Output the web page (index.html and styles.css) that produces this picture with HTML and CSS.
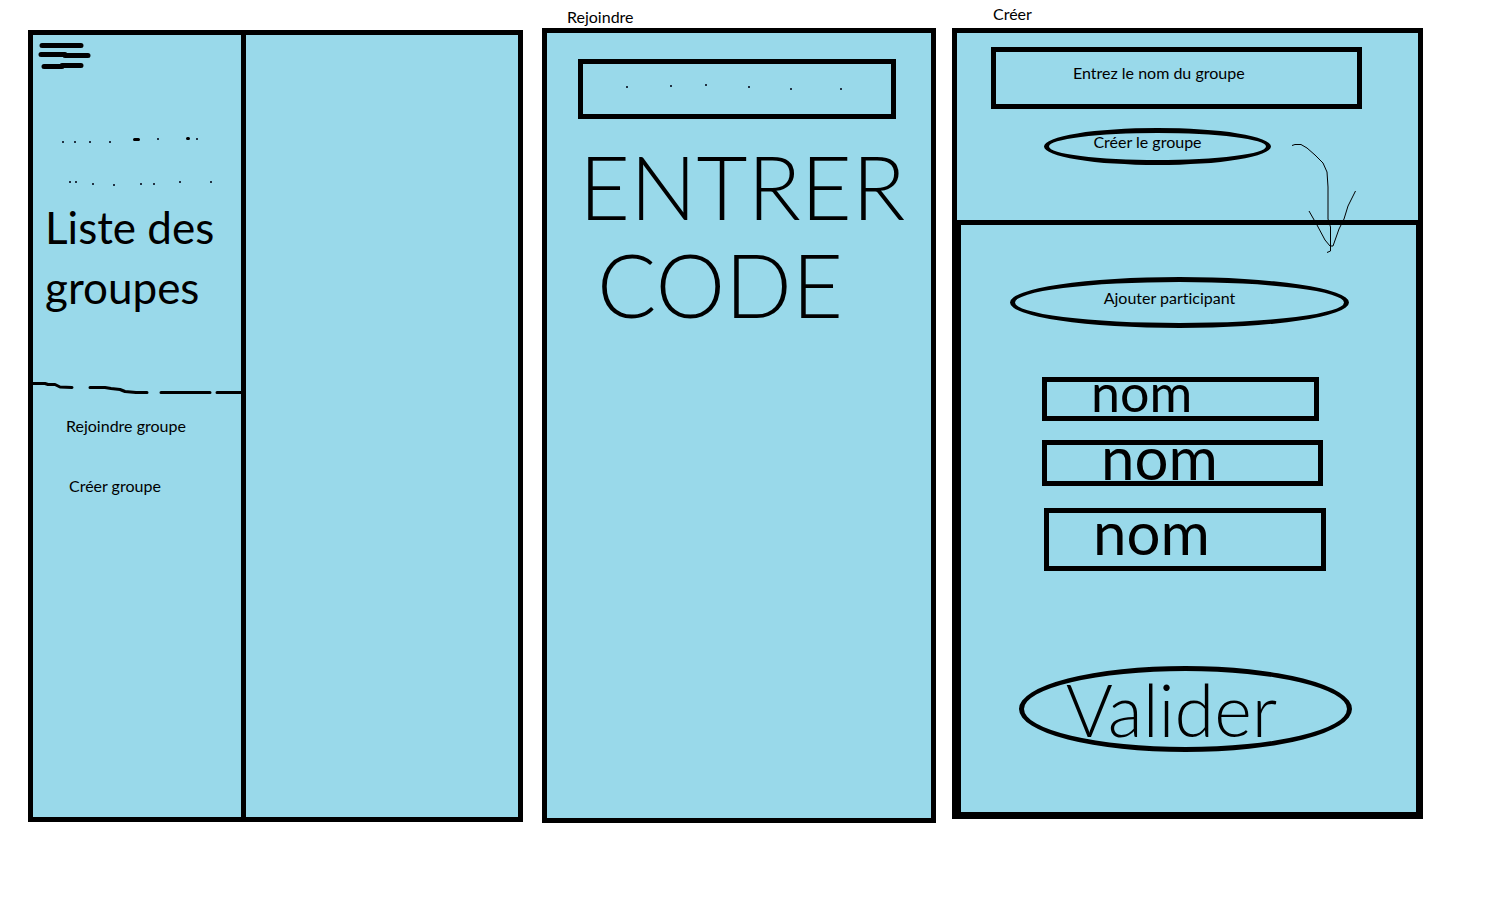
FILE: index.html
```html
<!DOCTYPE html>
<html lang="fr">
<head>
<meta charset="utf-8">
<meta name="viewport" content="width=device-width, initial-scale=1">
<title>Groupes</title>
<link rel="stylesheet" href="styles.css">
</head>
<body>
<main class="board">
  <section class="screen screen-home">
    <div class="frame home">
      <aside class="sidebar">
        <button class="menu" type="button" aria-label="Menu">
          <svg class="ink bold" viewBox="38 41 54 28" width="54" height="28"><path d="M42 45.500H81M41 54.500H65M65 55.500H88M44 66.500H62M62 65.500H81"/></svg>
        </button>
        <svg class="ink dots" viewBox="33 130 208 60" width="208" height="60" aria-hidden="true">
          <path d="M62 142h2M74 142h2M89 142h2M109 142h2M157 139h2M196 139h2M69 182h2M75 182h2M92 184h2M113 185h2M140 184h2M153 184h2M179 182h2M210 182h2"/>
          <path class="blob" d="M134.500 139.500h4M187.500 138.500h1"/>
        </svg>
        <h1 class="sketch list-title">Liste des<br>groupes</h1>
        <svg class="ink dashes" viewBox="33 380 208 16" height="16" preserveAspectRatio="none" aria-hidden="true"><path d="M33 383.500H45L48 384.500H55L60 387L72 387.500M90 387.500H105L111 388.500L120 389.500L125 391.500L136 392.500H147M161 392.500H210M217 392.500H243"/></svg>
        <nav class="links">
          <a href="#rejoindre">Rejoindre groupe</a>
          <a class="create" href="#creer">Créer groupe</a>
        </nav>
      </aside>
      <div class="content"></div>
    </div>
  </section>

  <section class="screen screen-join" id="rejoindre">
    <h2 class="label">Rejoindre</h2>
    <div class="frame">
      <div class="code-box">
        <input class="code-input" id="code" type="text" maxlength="6" aria-labelledby="code-label">
        <svg class="ink code-dots" viewBox="583 64 308 50" aria-hidden="true"><path d="M626 87h2M670 86h2M705 85h2M748 87h2M790 89h2M840 89h2"/></svg>
      </div>
      <label class="sketch code-label" id="code-label" for="code">ENTRER<br>CODE</label>
    </div>
  </section>

  <section class="screen screen-create" id="creer">
    <h2 class="label">Créer</h2>
    <div class="frame create-frame">
      <form class="name-form">
        <input class="field group-name" type="text" placeholder="Entrez le nom du groupe" aria-label="Nom du groupe">
        <button class="oval create-group" type="button">Créer le groupe</button>
      </form>
      <form class="members">
        <button class="oval add" type="button">Ajouter participant</button>
        <input class="field member first sketch" type="text" value="nom" aria-label="Participant 1">
        <input class="field member second sketch" type="text" value="nom" aria-label="Participant 2">
        <input class="field member third sketch" type="text" value="nom" aria-label="Participant 3">
        <button class="oval submit sketch" type="button">Valider</button>
      </form>
      <svg class="ink arrow" viewBox="1291 143 66 111" width="66" height="111" aria-hidden="true"><path d="M1292 145.500L1295 144.500H1301L1307 148L1315 155L1323 163L1327 172L1328 187V219L1330.500 227V251L1327 252.500M1309 211L1317 225L1325 240L1330 246H1333L1339 229L1344 219L1348 206L1355.500 191"/></svg>
    </div>
  </section>
</main>
</body>
</html>
```
FILE: styles.css
```css
* { box-sizing: border-box; }

body {
  margin: 0;
  background: #fff;
  color: #000;
  font: 16px/24px Lato, "Open Sans", sans-serif;
}

.board {
  display: flex;
  min-height: 100vh;
  padding: 0 63px 86px 28px;
}

.screen {
  display: flex;
  flex-direction: column;
  min-width: 0;
}
.screen-home { flex: 495 1 0; padding: 30px 0 1px; }
.screen-join { flex: 394 1 0; margin-left: 19px; }
.screen-create { flex: 471 1 0; margin: 0 0 4px 16px; }

.label {
  height: 28px;
  margin: 0;
  padding: 5px 0 0 25px;
  font-size: 16px;
  font-weight: 400;
}
.screen-create .label { padding: 2px 0 0 41px; }

.frame {
  flex: 1;
  position: relative;
  border: 5px solid #000;
  background: #99d9ea;
}

.sketch {
  font-family: Lato, "Open Sans", sans-serif;
  font-weight: 400;
}

.ink {
  display: block;
  fill: none;
  stroke: #000;
  stroke-width: 2;
  stroke-linejoin: round;
}

/* Home */
.home {
  display: grid;
  grid-template-columns: 213fr 272fr;
}
.sidebar {
  min-width: 0;
  border-right: 5px solid #000;
}

.menu {
  display: block;
  margin: 6px 0 0 5px;
  padding: 0;
  border: 0;
  background: none;
}
.bold { stroke-width: 5; stroke-linecap: round; }
.dots { max-width: 100%; margin-top: 61px; stroke: #234; }
.blob { stroke: #000; stroke-width: 3; stroke-linecap: round; }

.list-title {
  margin: 7px 0 0;
  padding-left: 12px;
  font-size: 44px;
  line-height: 60px;
}

.dashes {
  width: 100%;
  margin-top: 63px;
  stroke-width: 3;
  stroke-linecap: round;
}

.links {
  display: flex;
  flex-direction: column;
  gap: 36px;
  margin-top: 18px;
  padding-left: 33px;
}
.links a { color: inherit; text-decoration: none; }
.links .create { padding-left: 3px; }

/* Join */
.code-box {
  position: relative;
  height: 60px;
  margin: 26px 35px 0 31px;
}
.code-input {
  width: 100%;
  height: 100%;
  padding: 0 40px;
  border: 5px solid #000;
  border-radius: 0;
  background: none;
  font: inherit;
}
.code-dots {
  position: absolute;
  inset: 5px;
  stroke: #234;
  pointer-events: none;
}
.code-label {
  display: block;
  margin-top: 18px;
  padding-left: 50px;
  font-size: 88px;
  font-weight: 300;
  line-height: 98px;
  text-indent: -18px;
}

/* Create */
.create-frame,
.name-form,
.members {
  display: flex;
  flex-direction: column;
}
.name-form { padding: 14px 56px 55px 34px; }

.field,
.oval {
  border: 5px solid #000;
  background: none;
  color: #000;
  font-size: 16px;
  line-height: 18px;
}
.field {
  width: 100%;
  border-radius: 0;
}
.oval {
  padding: 0;
  border-radius: 50%;
  font-variant-ligatures: none;
}
.group-name,
.create-group,
.add { font-family: inherit; }

.group-name {
  height: 62px;
  padding: 0 0 12px 77px;
}
.group-name::placeholder { color: #000; opacity: 1; }

.create-group {
  height: 37px;
  margin: 19px 91px 0 53px;
  padding: 0 20px 9px 0;
}

.members {
  flex: 1;
  padding: 52px 64px 58px 49px;
  border: solid #000;
  border-width: 5px 2px 2px 4px;
}
.add {
  height: 51px;
  margin-right: 3px;
  padding: 0 20px 10px 0;
}
.member {
  width: auto;
  padding: 0 0 16px 44px;
  font-size: 60px;
}
.first {
  height: 44px;
  margin: 49px 33px 0 32px;
  padding-bottom: 14px;
  font-size: 52px;
}
.second {
  height: 46px;
  margin: 19px 29px 0 32px;
  padding: 0 0 12px 54px;
}
.third { height: 63px; margin: 22px 26px 0 34px; }

.submit {
  height: 86px;
  margin: 95px 0 0 9px;
  padding-right: 28px;
  font-size: 72px;
  font-weight: 300;
  line-height: 76px;
}

.arrow {
  position: absolute;
  top: 110px;
  right: 61px;
  stroke-width: 1;
  pointer-events: none;
}
```
